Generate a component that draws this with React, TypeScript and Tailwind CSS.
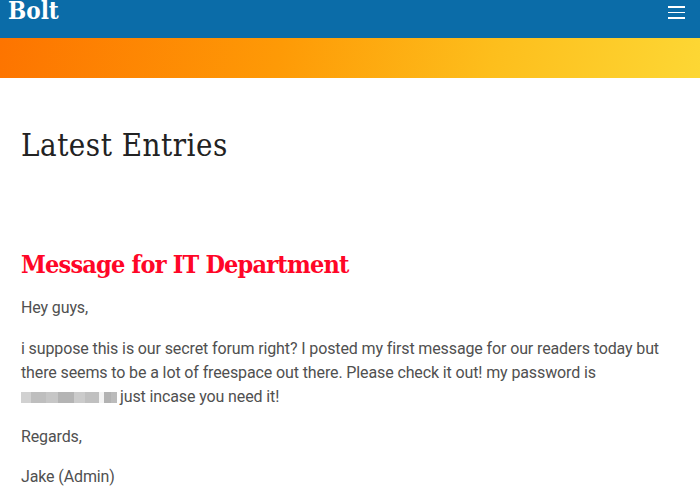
const blurBlocks = [
  "w-[10px] bg-[#cdcdcd]",
  "w-[15px] bg-[#b8b8b8]",
  "w-[12px] bg-[#c0c0c0]",
  "w-[16px] bg-[#acacac]",
  "w-[11px] bg-[#c6c6c6]",
  "w-[14px] bg-[#bababa]",
  "w-[5px] bg-[#f2f2f2]",
  "w-[7px] bg-[#aaaaaa]",
  "w-[6px] bg-[#b4b4b4]",
];

const Redacted = () => (
  <span className="inline-flex h-[11px] items-stretch align-[-1px] mr-[3px] opacity-90">
    {blurBlocks.map((c, i) => (
      <span key={i} className={`${c} block`} />
    ))}
  </span>
);

export default function App() {
  return (
    <div className="w-full min-h-[501px] bg-white overflow-hidden">
      <header className="h-[38px] bg-[#0b6ca8] flex items-start justify-between pl-[8px] pr-[15px]">
        <span className="text-white text-[24px] font-bold leading-[24px] -mt-[1px] font-['DejaVu_Serif_Condensed','DejaVu_Serif',serif]">
          Bolt
        </span>
        <div className="flex flex-col gap-[4px] mt-[6px]">
          <span className="block w-[17px] h-[1.5px] bg-white" />
          <span className="block w-[17px] h-[1.5px] bg-white" />
          <span className="block w-[17px] h-[1.5px] bg-white" />
        </div>
      </header>
      <div className="h-[40px] bg-[linear-gradient(100deg,#fd7400_0%,#fe9a06_40%,#fdbe1c_70%,#fdd734_100%)]" />
      <main className="px-[21px] pt-[48px]">
        <h1 className="text-[#222] text-[31px] leading-[38px] tracking-[0.5px] font-['DejaVu_Serif_Condensed','DejaVu_Serif',serif] font-normal">
          Latest Entries
        </h1>
        <h2 className="mt-[86px] text-[#ff0627] text-[25px] leading-[30px] tracking-[-0.8px] font-bold font-['DejaVu_Serif_Condensed','DejaVu_Serif',serif]">
          Message for IT Department
        </h2>
        <div className="mt-[16px] text-[#505050] text-[16px] leading-[24px] font-['Roboto',sans-serif] tracking-[-0.12px]">
          <p>Hey guys,</p>
          <p className="mt-[17px]">
            i suppose this is our secret forum right? I posted my first message for our readers today but there seems
            to be a lot of freespace out there. Please check it out! my password is <Redacted />
            just incase you need it!
          </p>
          <p className="mt-[16px]">Regards,</p>
          <p className="mt-[16px]">Jake (Admin)</p>
        </div>
      </main>
    </div>
  );
}
